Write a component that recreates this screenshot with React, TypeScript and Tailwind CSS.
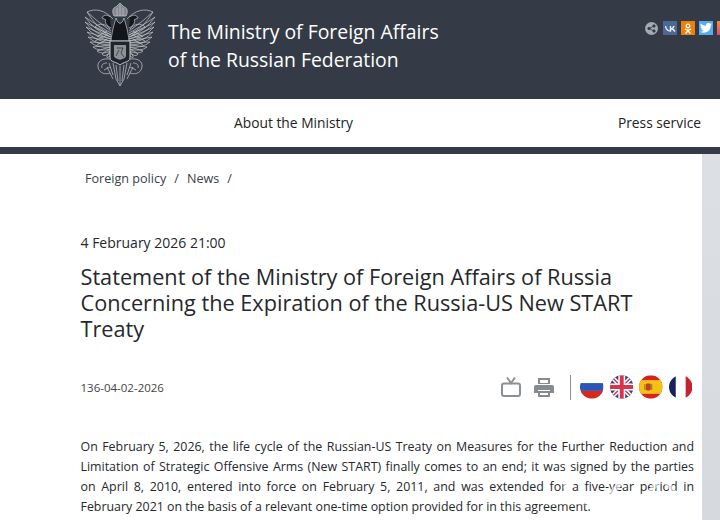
function Emblem() {
	// feather tips along the outer edge of the right wing, mirrored for the left
	const tips = [
		[70, 11], [72, 16], [72, 21], [71, 26], [70, 31], [69, 36], [67, 41], [64, 46], [60, 50], [55, 53], [50, 55],
	]
	const wing = (
		<g>
			{tips.map(([x, y], i) => (
				<path key={i} d={`M46 ${30 + i * 2} Q${(x + 46) / 2 + 2} ${(y + 30) / 2 + i} ${x} ${y} Q${(x + 46) / 2 + 3} ${(y + 34) / 2 + i + 4} 46 ${34 + i * 2}`} />
			))}
			<path d="M44 18 C52 9 62 7 70 11 M47 28 C52 22 58 22 62 26 C56 28 52 32 47 36" />
			<path d="M50 30 L60 36 M50 34 L62 40 M50 38 L60 44" />
			<path d="M47 58 C54 57 60 60 59 66 C58 72 52 74 47 72 M50 62 C54 62 56 64 55 67 M47 66 L53 69" />
			<path d="M47 16 C50 13 54 14 55 17 L51 19 C53 21 50 25 46 27" fill="#14181d" />
		</g>
	)
	return (
		<svg width="74" height="86" viewBox="0 0 74 86" fill="none" stroke="#c5c8cd" strokeWidth="0.7">
			{wing}
			<g transform="translate(74 0) scale(-1 1)">{wing}</g>
			{/* crown */}
			<path d="M31 15 C28 9 31 6 33 6 L37 2 L41 6 C43 6 46 9 43 15 Z" fill="#83888f" />
			<path d="M34 15 V7 M37 15 V4 M40 15 V7" />
			{/* neck and body */}
			<path d="M33 17 C31 24 29 30 28 40 L46 40 C45 30 43 24 41 17 C39 24 35 24 33 17 Z" fill="#12161b" />
			{/* shield */}
			<path d="M27 40 H47 V57 C47 61 40 61 37 64 C34 61 27 61 27 57 Z" fill="#20252b" strokeWidth="1" />
			<path d="M31 44 H43 V55 C43 57 39 58 37 59 C35 58 31 57 31 55 Z" fill="#8e9298" stroke="none" />
			<path d="M34 47 L40 47 L38 52 L41 56 M36 49 L33 55" stroke="#20252b" />
			{/* tail */}
			<path d="M30 62 L33 78 L37 85 L41 78 L44 62 M33 64 L35 80 M41 64 L39 80 M37 65 V84" />
			<path d="M26 62 L30 74 M48 62 L44 74 M24 66 L30 78 M50 66 L44 78" />
		</svg>
	)
}

function Social() {
	return (
		<div className="flex items-center gap-[4px]">
			<div className="w-[13px] h-[13px] rounded-full bg-[#a3aab1] flex items-center justify-center mr-[1px]">
				<svg width="9" height="9" viewBox="0 0 9 9" fill="#343b46" stroke="#343b46" strokeWidth="0.8">
					<circle cx="2" cy="4.5" r="1.2" />
					<circle cx="7" cy="2" r="1.2" />
					<circle cx="7" cy="7" r="1.2" />
					<path d="M2 4.5 L7 2 M2 4.5 L7 7" />
				</svg>
			</div>
			<div className="w-[14px] h-[14px] bg-[#4a6a95] flex items-center justify-center">
				<svg width="11" height="7" viewBox="0 0 11 7" fill="none" stroke="#e8edf3" strokeWidth="1.4">
					<path d="M0.5 1 C1 4 3 6 5.5 6 V1 M5.5 4 C7 4 8.5 2.5 9 1 M5.5 3.5 C7.5 3.5 9 5 10 6.5" />
				</svg>
			</div>
			<div className="w-[14px] h-[14px] bg-[#ee8208] flex items-center justify-center">
				<svg width="8" height="11" viewBox="0 0 8 11" fill="none" stroke="#fff" strokeWidth="1.3">
					<circle cx="4" cy="3" r="1.8" />
					<path d="M1 6 C3 7.5 5 7.5 7 6 M4 7 V8 M1.5 10.5 L4 8 L6.5 10.5" />
				</svg>
			</div>
			<div className="w-[14px] h-[14px] bg-[#55acee] flex items-center justify-center">
				<svg width="12" height="10" viewBox="0 0 24 20" fill="#fff">
					<path d="M24 2.4a10 10 0 0 1-2.8.8A5 5 0 0 0 23.300.5a10 10 0 0 1-3.100 1.200 4.900 4.900 0 0 0-8.400 4.500A14 14 0 0 1 1.700 1a4.900 4.900 0 0 0 1.500 6.600A5 5 0 0 1 1 7v.1a4.900 4.900 0 0 0 3.900 4.800 5 5 0 0 1-2.200.1 4.900 4.900 0 0 0 4.600 3.400A10 10 0 0 1 0 17.500 14 14 0 0 0 7.500 19.700c9 0 14-7.500 14-14v-.6A10 10 0 0 0 24 2.400z" />
				</svg>
			</div>
			<div className="w-[14px] h-[14px] bg-gradient-to-b from-[#f58a3c] to-[#dc4b6e] shrink-0" />
		</div>
	)
}

function Flags() {
	return (
		<div className="flex items-center gap-[6px]">
			<svg width="23.5" height="24" viewBox="0 0 24 24">
				<defs>
					<clipPath id="flagclip"><circle cx="12" cy="12" r="12" /></clipPath>
				</defs>
				<g clipPath="url(#flagclip)">
					<rect width="24" height="8" fill="#fff" />
					<rect y="8" width="24" height="8" fill="#2a56b5" />
					<rect y="16" width="24" height="8" fill="#d6281f" />
				</g>
			</svg>
			<svg width="23.5" height="24" viewBox="0 0 24 24">
				<g clipPath="url(#flagclip)">
					<rect width="24" height="24" fill="#2c4a8c" />
					<path d="M0 0 L24 24 M24 0 L0 24" stroke="#fff" strokeWidth="4.500" />
					<path d="M0 0 L24 24 M24 0 L0 24" stroke="#d8344a" strokeWidth="1.500" />
					<path d="M12 0 V24 M0 12 H24" stroke="#fff" strokeWidth="7" />
					<path d="M12 0 V24 M0 12 H24" stroke="#d8344a" strokeWidth="4" />
				</g>
			</svg>
			<svg width="23.5" height="24" viewBox="0 0 24 24">
				<g clipPath="url(#flagclip)">
					<rect width="24" height="24" fill="#d4251c" />
					<rect y="5" width="24" height="14" fill="#f6c016" />
					<rect x="7" y="8.500" width="5" height="7" rx="1.500" fill="#b5442a" />
					<rect x="5.500" y="9" width="1" height="6" fill="#9a6a20" />
					<rect x="12.500" y="9" width="1" height="6" fill="#9a6a20" />
				</g>
			</svg>
			<svg width="23.5" height="24" viewBox="0 0 24 24">
				<g clipPath="url(#flagclip)">
					<rect width="7" height="24" fill="#14235f" />
					<rect x="7" width="10" height="24" fill="#fff" />
					<rect x="17" width="7" height="24" fill="#c8202f" />
				</g>
			</svg>
		</div>
	)
}

export default function App() {
	const line = "[text-align-last:justify]"
	return (
		<div className="w-[720px] h-[520px] overflow-hidden bg-white text-[#25282c] font-['Open_Sans','Noto_Sans',sans-serif]">
			<header className="h-[99px] bg-[#343b46] flex items-start">
				<div className="ml-[83px] mt-[1px] shrink-0">
					<Emblem />
				</div>
				<div className="ml-[11px] mt-[18px] text-white text-[19.400px] leading-[28px] w-[330px]">
					<div>The Ministry of Foreign Affairs</div>
					<div>of the Russian Federation</div>
				</div>
				<div className="ml-auto mt-[21px] -mr-[11px]">
					<Social />
				</div>
			</header>

			<nav className="h-[48px] flex items-center text-[13.800px] text-[#222]">
				<span className="ml-[234px]">About the Ministry</span>
				<span className="ml-auto mr-[19px]">Press service</span>
			</nav>
			<div className="h-[7px] bg-[#343b46]" />

			<div className="flex h-[366px]">
				<main className="w-[702px] shrink-0 relative pl-[80.500px] pr-[8px]">
					<div className="pl-[4.500px] pt-[16px] text-[12.600px] leading-[18px] text-[#3c4047] flex gap-[8px]">
						<span>Foreign policy</span>
						<span>/</span>
						<span>News</span>
						<span>/</span>
					</div>
					<div className="mt-[45px] text-[14px] leading-[20px]">4 February 2026 21:00</div>
					<h1 className="mt-[11px] text-[21.700px] leading-[26px] font-normal">
						Statement of the Ministry of Foreign Affairs of Russia
						<br />
						Concerning the Expiration of the Russia-US New START
						<br />
						Treaty
					</h1>
					<div className="mt-[31px] h-[28px] flex items-center">
						<span className="mt-[2px] text-[11.500px] text-[#444]">136-04-02-2026</span>
						<div className="ml-auto flex items-center">
							<svg width="22" height="22" viewBox="0 0 22 22" fill="none" stroke="#8a9094" strokeWidth="2">
								<rect x="2" y="7.500" width="18" height="12.500" rx="2" />
								<path d="M7 1.500 L11 7 L15 1.500" />
							</svg>
							<svg className="ml-[12px]" width="20" height="21" viewBox="0 0 20 21" fill="#858b90">
								<path d="M4 1 H16 V7 H4 Z M6 3 V6 H14 V3 Z" fillRule="evenodd" />
								<path d="M2 8 H18 A2 2 0 0 1 20 10 V16 H16 V13 H4 V16 H0 V10 A2 2 0 0 1 2 8 Z" />
								<path d="M4 14 H16 V20 H4 Z M6 16 V18 H14 V16 Z" fillRule="evenodd" />
							</svg>
							<div className="ml-[16px] w-[1px] h-[25px] bg-[#8b9196]" />
							<div className="ml-[9px] mr-[2px]">
								<Flags />
							</div>
						</div>
					</div>
					<div className="mt-[36px] text-[12.400px] leading-[20px] text-justify">
						<div className={line}>On February 5, 2026, the life cycle of the Russian-US Treaty on Measures for the Further Reduction and</div>
						<div className={line}>Limitation of Strategic Offensive Arms (New START) finally comes to an end; it was signed by the parties</div>
						<div className={line}>on April 8, 2010, entered into force on February 5, 2011, and was extended for a five-year period in</div>
						<div>February 2021 on the basis of a relevant one-time option provided for in this agreement.</div>
					</div>
					<svg className="absolute left-[544px] top-[316px]" width="158" height="36" viewBox="0 0 158 36" fill="none" stroke="#ffffff" strokeWidth="5" opacity="0.65">
						<path d="M4 8 H40 M22 8 V18 M2 32 H44 M60 6 H84 L60 30 H90 M100 30 L118 6 L136 30 M146 4 C156 8 156 26 148 32" />
					</svg>
				</main>
				<aside className="flex-1 bg-gradient-to-b from-[#dcdfe4] to-[#d6d9de]" />
			</div>
		</div>
	)
}
